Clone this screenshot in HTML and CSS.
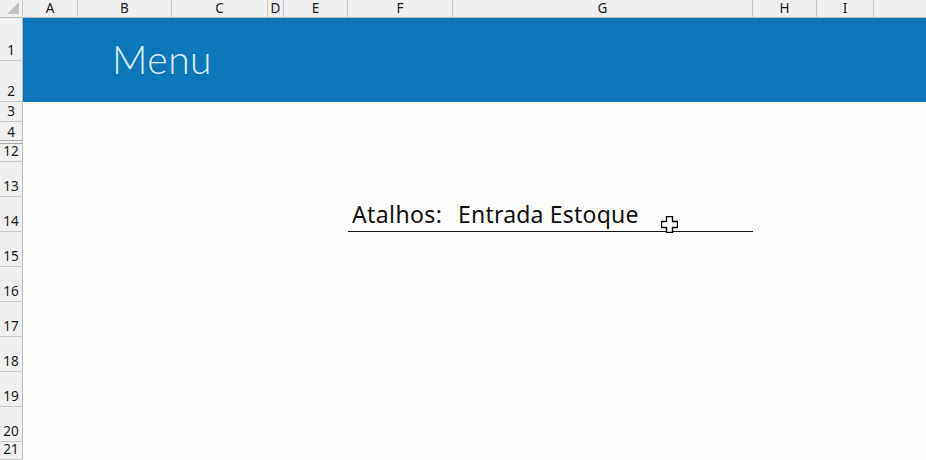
FILE: index.html
```html
<!DOCTYPE html>
<html>
<head>
<meta charset="utf-8">
<link rel="stylesheet" href="styles.css">
</head>
<body>
<div class="sheet">
  <div class="corner"><span class="tri"></span></div>
  <div class="ch">A</div>
  <div class="ch">B</div>
  <div class="ch">C</div>
  <div class="ch">D</div>
  <div class="ch">E</div>
  <div class="ch">F</div>
  <div class="ch">G</div>
  <div class="ch">H</div>
  <div class="ch">I</div>
  <div class="ch last"></div>

  <div class="rh">1</div>
  <div class="rh">2</div>
  <div class="rh">3</div>
  <div class="rh hidden-after">4</div>
  <div class="rh">12</div>
  <div class="rh">13</div>
  <div class="rh">14</div>
  <div class="rh">15</div>
  <div class="rh">16</div>
  <div class="rh">17</div>
  <div class="rh">18</div>
  <div class="rh">19</div>
  <div class="rh">20</div>
  <div class="rh">21</div>

  <div class="band"><span class="title">Menu</span></div>

  <div class="cell lbl">Atalhos:</div>
  <div class="cell link">Entrada Estoque<svg class="cursor" width="17" height="17" viewBox="0 0 17 17"><path d="M5.5 0.5h6v5h5v6h-5v5h-6v-5h-5v-6h5z" fill="#fff" stroke="#000" stroke-width="1.4"/></svg></div>
</div>
</body>
</html>
```

FILE: styles.css
```css
html, body {
  margin: 0;
  padding: 0;
  background: #fdfdfb;
}
body {
  width: 926px;
  height: 460px;
  overflow: hidden;
  font-family: "Noto Sans", "Liberation Sans", sans-serif;
}
.sheet {
  display: grid;
  grid-template-columns: 23px 55px 94px 96px 16px 64px 105px 300px 64px 57px 1fr;
  grid-template-rows: 18px 43px 41px 20px 22px 18px repeat(8, 35px) 18px;
  width: 926px;
  height: 460px;
  overflow: hidden;
  background: #fdfdfb;
}
.corner {
  position: relative;
  background: #efefef;
  border-right: 1px solid #c8c8c8;
  border-bottom: 1px solid #bdbdbd;
  box-sizing: border-box;
}
.tri {
  position: absolute;
  right: 3px;
  bottom: 3px;
  width: 0;
  height: 0;
  border-left: 12px solid transparent;
  border-bottom: 12px solid #c5c5c5;
}
.ch {
  background: #efefef;
  border-right: 1px solid #c8c8c8;
  border-bottom: 1px solid #bdbdbd;
  box-sizing: border-box;
  font-size: 13.5px;
  color: #1e1e1e;
  display: flex;
  align-items: center;
  justify-content: center;
  line-height: 1;
  padding-top: 1px;
}
.ch.last {
  border-right: none;
}
.rh {
  grid-column: 1;
  background: #efefef;
  border-right: 1px solid #bdbdbd;
  border-bottom: 1px solid #c8c8c8;
  box-sizing: border-box;
  font-size: 13.5px;
  color: #1e1e1e;
  display: flex;
  align-items: flex-end;
  justify-content: center;
  padding-bottom: 3px;
  line-height: 1;
}
.rh:last-child {
  padding-bottom: 1px;
}
.rh.hidden-after {
  border-bottom: 4px double #a8a8a8;
  padding-bottom: 1px;
}
.band {
  grid-column: 2 / -1;
  grid-row: 2 / 4;
  background: #0d76b9;
  display: flex;
  align-items: center;
  padding-left: 89px;
  padding-bottom: 3px;
  box-sizing: border-box;
}
.title {
  font-family: "Lato", "Noto Sans", sans-serif;
  font-weight: 300;
  font-size: 39px;
  color: #dceefa;
  letter-spacing: 0.5px;
}
.cell {
  grid-row: 8;
  border-bottom: 1px solid #111;
  box-sizing: border-box;
  display: flex;
  align-items: flex-end;
  font-family: "Noto Sans", "Open Sans", sans-serif;
  font-size: 23px;
  color: #111;
  line-height: 1;
  padding-bottom: 5px;
  white-space: nowrap;
}
.lbl {
  grid-column: 7;
  padding-left: 4px;
  letter-spacing: 0.4px;
}
.link {
  grid-column: 8;
  padding-left: 5px;
  position: relative;
  letter-spacing: 0.2px;
}
.cursor {
  position: absolute;
  left: 208px;
  top: 19px;
}
```
